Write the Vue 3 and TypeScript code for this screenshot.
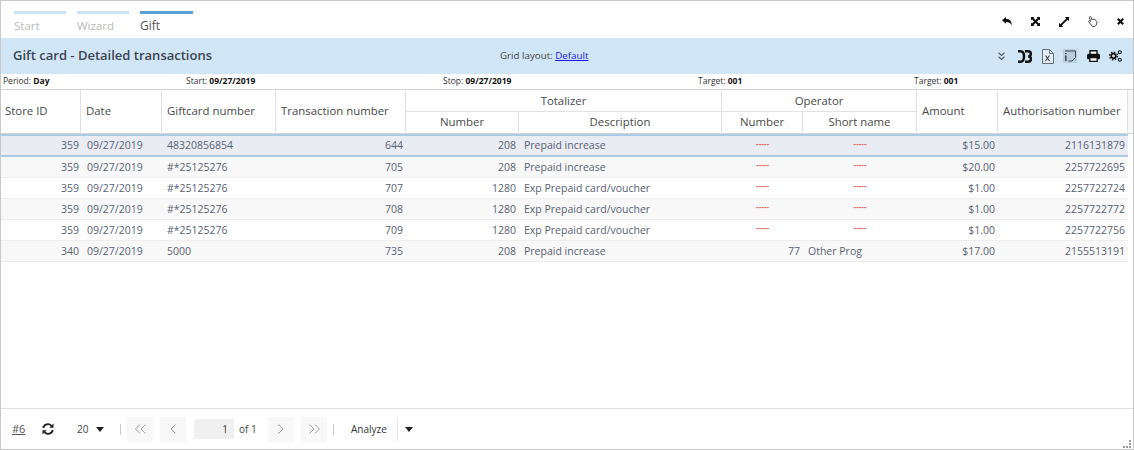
<script setup lang="ts">
interface Row {
  store: string; date: string; card: string; tx: string; num: string; desc: string;
  opNum: string; opName: string; amount: string; auth: string;
}
const d = '-----';
const rows: Row[] = [
  { store: '359', date: '09/27/2019', card: '48320856854', tx: '644', num: '208', desc: 'Prepaid increase', opNum: d, opName: d, amount: '$15.00', auth: '2116131879' },
  { store: '359', date: '09/27/2019', card: '#*25125276', tx: '705', num: '208', desc: 'Prepaid increase', opNum: d, opName: d, amount: '$20.00', auth: '2257722695' },
  { store: '359', date: '09/27/2019', card: '#*25125276', tx: '707', num: '1280', desc: 'Exp Prepaid card/voucher', opNum: d, opName: d, amount: '$1.00', auth: '2257722724' },
  { store: '359', date: '09/27/2019', card: '#*25125276', tx: '708', num: '1280', desc: 'Exp Prepaid card/voucher', opNum: d, opName: d, amount: '$1.00', auth: '2257722772' },
  { store: '359', date: '09/27/2019', card: '#*25125276', tx: '709', num: '1280', desc: 'Exp Prepaid card/voucher', opNum: d, opName: d, amount: '$1.00', auth: '2257722756' },
  { store: '340', date: '09/27/2019', card: '5000', tx: '735', num: '208', desc: 'Prepaid increase', opNum: '77', opName: 'Other Prog', amount: '$17.00', auth: '2155513191' },
];
const widths = [80, 81, 114, 130, 113, 203, 81, 114, 81, 130];
</script>

<template>
  <div class="window">
    <div class="topbar">
      <nav class="steps">
        <div class="step">Start</div>
        <div class="step">Wizard</div>
        <div class="step active">Gift</div>
      </nav>
      <div class="top-icons">
        <svg width="10" height="9" viewBox="0 0 10 9"><path d="M0 3.200 4 0v2c3.600 0 5.800 1.800 5.800 6.800C9 6.200 7.200 5 4 5v1.800z" fill="#111"/></svg>
        <svg width="9" height="9" viewBox="0 0 9 9" fill="#111"><path d="M0 0h3.400L2.500 1 4.500 3l2-2-.9-1H9v3.400L8 2.500l-2 2 2 2 1-.9V9H5.600l.9-1-2-2-2 2 .9 1H0V5.600l1 .9 2-2-2-2-1 .9z"/></svg>
        <svg width="10" height="10" viewBox="0 0 10 10" fill="#111"><path d="M5.800 0H10v4.200L8.600 2.800 2.800 8.600 4.200 10H0V5.800l1.400 1.400 5.800-5.800z"/></svg>
        <svg width="10" height="11" viewBox="0 0 10 11"><path d="M1.600.8c.6-.5 1.300-.2 1.500.5l.6 2.100 2.500-.2c1 .1 1.700.8 1.700 1.700l1.100 1.700-.8 2.600-1.600 1.300H4.400L.7 5.800c-.4-.6.3-1.300 1-.9l.9.6-1.200-4c-.1-.3 0-.5.2-.7z" fill="#fff" stroke="#444" stroke-width="1"/></svg>
        <svg width="7" height="7" viewBox="0 0 7 7"><path d="M.8.8l5.400 5.400M6.200.8.800 6.200" stroke="#111" stroke-width="2.200"/></svg>
      </div>
    </div>

    <header class="band">
      <h1 class="title">Gift card - Detailed transactions</h1>
      <div class="layout">Grid layout: <a href="#">Default</a></div>
      <div class="band-icons">
        <svg class="bi1" width="7" height="9" viewBox="0 0 7 9" fill="none" stroke="#56606e" stroke-width="1.200"><path d="M.5 .8l3 2.700 3-2.700M.5 4.800l3 2.700 3-2.700"/></svg>
        <svg class="bi2" width="14" height="13" viewBox="0 0 14 13" fill="none" stroke="#111" stroke-width="2.500"><path d="M0 1.300h2.500c2.300 0 3.500 2.200 3.500 5.200s-1.200 5.200-3.500 5.200H0"/><path d="M7 1.300h3.200c1.700 0 2.600 1 2.600 2.500s-1 2.700-2.700 2.700c1.900 0 2.900 1 2.900 2.600s-1 2.600-2.900 2.600H7"/></svg>
        <svg class="bi3" width="12" height="15" viewBox="0 0 12 15" fill="#e4edf5" stroke="#66707e"><path d="M.5.500h7l4 4v10H.5z"/><path d="M7.500.500v4h4" fill="none"/><path d="M3.500 6.500l4 5.500M7.500 6.500l-4 5.500" stroke="#333b48" stroke-width="1.100"/></svg>
        <span class="bi4"><svg width="12" height="12" viewBox="0 0 12 12" fill="none" stroke="#3f4753"><path d="M1 1h10.500v6.500l-3.500 3.500H4.500"/><path d="M1.800 3v1.200M1.800 5.500V11" stroke-width="1.500"/></svg></span>
        <svg class="bi5" width="13" height="12" viewBox="0 0 13 12"><path d="M3 4V.8h7V4" fill="#fff" stroke="#111" stroke-width="1.400"/><rect x="0" y="3.800" width="13" height="5.500" rx="1.500" fill="#111"/><path d="M2.800 7.500h7.400v3.800H2.800z" fill="#fff" stroke="#111" stroke-width="1.300"/></svg>
        <svg class="bi6" width="13" height="12" viewBox="0 0 13 12" fill="none" stroke="#111"><circle cx="4.500" cy="6" r="2.300" stroke-width="1.700"/><circle cx="4.500" cy="6" r="3.900" stroke-width="1.400" stroke-dasharray="1.500 1.560"/><circle cx="10.800" cy="2.200" r="1.500" stroke-width="1.100"/><circle cx="10.800" cy="9.800" r="1.500" stroke-width="1.100"/></svg>
      </div>
    </header>

    <div class="info">
      <span>Period: <b>Day</b></span>
      <span>Start: <b>09/27/2019</b></span>
      <span>Stop: <b>09/27/2019</b></span>
      <span>Target: <b>001</b></span>
      <span>Target: <b>001</b></span>
    </div>

    <div class="grid-wrap">
      <table class="grid">
        <colgroup>
          <col v-for="(w, i) in widths" :key="i" :style="{ width: w + 'px' }" />
          <col />
        </colgroup>
        <thead>
          <tr class="h1">
            <th rowspan="2" class="left first-col">Store ID</th>
            <th rowspan="2" class="left">Date</th>
            <th rowspan="2" class="left">Giftcard number</th>
            <th rowspan="2" class="left">Transaction number</th>
            <th colspan="2" class="group">Totalizer</th>
            <th colspan="2" class="group">Operator</th>
            <th rowspan="2" class="left">Amount</th>
            <th rowspan="2" class="left">Authorisation number</th>
            <th rowspan="2" class="tail"></th>
          </tr>
          <tr class="h2">
            <th>Number</th>
            <th>Description</th>
            <th>Number</th>
            <th>Short name</th>
          </tr>
        </thead>
        <tbody>
          <tr v-for="(r, i) in rows" :key="i" :class="{ selected: i === 0, odd: i % 2 === 1 }">
            <td class="r store">{{ r.store }}</td>
            <td class="date">{{ r.date }}</td>
            <td>{{ r.card }}</td>
            <td class="r">{{ r.tx }}</td>
            <td class="r">{{ r.num }}</td>
            <td>{{ r.desc }}</td>
            <td :class="r.opNum === d ? 'dash' : 'r'">{{ r.opNum }}</td>
            <td :class="{ dash: r.opName === d }">{{ r.opName }}</td>
            <td class="r">{{ r.amount }}</td>
            <td class="r">{{ r.auth }}</td>
            <td class="blank"></td>
          </tr>
        </tbody>
      </table>
    </div>

    <footer class="pager">
      <a class="count" href="#">#6</a>
      <svg class="refresh" width="12" height="12" viewBox="0 0 12 12" fill="none" stroke="#222" stroke-width="1.900"><path d="M1.200 5A4.800 4.800 0 0 1 9.500 2.800M10.800 7A4.800 4.800 0 0 1 2.500 9.200"/><path d="M11.500 .5v4.200H7.300zM.5 11.500V7.300h4.200z" fill="#222" stroke="none"/></svg>
      <span class="size">20</span>
      <span class="caret c1"></span>
      <span class="sep s1"></span>
      <button class="nav first"><svg width="11" height="10" viewBox="0 0 11 10" fill="none" stroke="#a0a0a0"><path d="M5 .5.500 5 5 9.500M10.500.5 6 5l4.500 4.500"/></svg></button>
      <button class="nav prev"><svg width="6" height="10" viewBox="0 0 6 10" fill="none" stroke="#909090"><path d="M5.500.5 1 5l4.500 4.500"/></svg></button>
      <span class="page">1</span>
      <span class="of">of 1</span>
      <button class="nav next"><svg width="6" height="10" viewBox="0 0 6 10" fill="none" stroke="#909090"><path d="M.5.500 5 5 .5 9.500"/></svg></button>
      <button class="nav last"><svg width="11" height="10" viewBox="0 0 11 10" fill="none" stroke="#a0a0a0"><path d="M.5.500 5 5 .5 9.500M6 .5 10.500 5 6 9.500"/></svg></button>
      <span class="sep s2"></span>
      <span class="analyze">Analyze</span>
      <span class="sep s3"></span>
      <span class="caret c2"></span>
      <span class="grip"><i></i><i></i><i class="on"></i><i></i><i></i><i class="on"></i><i class="on"></i><i class="on"></i><i class="on"></i></span>
    </footer>
  </div>
</template>

<style>
html, body { margin: 0; background: #fff; }
</style>

<style scoped>
.window {
  width: 1134px; height: 450px; box-sizing: border-box; border: 1px solid #c8c8c8;
  display: flex; flex-direction: column; background: #fff; overflow: hidden;
  font-family: "Open Sans", "Noto Sans", sans-serif; color: #4a5160;
}
.topbar { height: 37px; flex: none; display: flex; justify-content: space-between; }
.steps { display: flex; gap: 11px; padding: 10px 0 0 13px; }
.step {
  width: 52px; border-top: 3px solid #c8e3f5; padding-top: 3px;
  font-size: 11.5px; line-height: 17px; color: #b9b9b9;
}
.step.active { width: 53px; border-top-color: #5b9fd6; color: #555; font-size: 12px; }
.top-icons { display: flex; align-items: center; gap: 19px; padding-top: 4px; margin-right: 9px; }
.band {
  height: 36px; flex: none; background: #d0e6f7;
  display: flex; align-items: center; padding: 0 11px 0 12px;
}
.title { margin: 0 0 2px; width: 487px; flex: none; font-size: 13px; font-weight: 600; color: #3c4450; }
.layout { font-size: 9.75px; line-height: 15px; color: #444; margin-bottom: 1px; white-space: nowrap; }
.layout a { color: #1a1ae6; }
.band-icons { margin-left: auto; display: flex; align-items: center; }
.bi2 { margin-left: 13px; }
.bi3 { margin-left: 10px; }
.bi4 { margin-left: 9px; width: 14px; height: 14px; background: #b9cfe0; display: flex; align-items: center; justify-content: center; }
.bi5 { margin-left: 10px; }
.bi6 { margin-left: 9px; }
.info {
  height: 15px; flex: none; box-sizing: border-box; padding-left: 2px;
  display: grid; grid-template-columns: 183px 257px 255px 216px 1fr;
  font-size: 8.5px; line-height: 14px; color: #333; white-space: nowrap;
}
.info b { color: #111; }
.grid-wrap { flex: 1 1 0; min-height: 0; }
.grid {
  border-collapse: separate; border-spacing: 0; table-layout: fixed; width: 1132px;
  font-size: 10.5px;
}
th {
  font-weight: 400; font-size: 11.4px; color: #4a4a4a; text-align: center; padding: 0 5px;
  border-top: 1px solid #d4d4d4; border-right: 1px solid #e2e2e2; background: #fff; white-space: nowrap; overflow: hidden;
}
thead tr.h1 th { height: 21px; }
thead tr.h1 th[rowspan] { padding-bottom: 2px; }
thead tr.h2 th { height: 19px; padding-bottom: 2px; border-top: 1px solid #e2e2e2; }
thead tr.h2 th, thead tr.h1 th[rowspan] { border-bottom: 1px solid #d4d4d4; }
th.left { text-align: left; }
th.first-col { padding-left: 4px; }
th.tail { border-right: 0; padding: 0; background: #f7f7f7; }
td {
  height: 20px; padding: 0 5px; border-bottom: 1px solid #ededed; color: #586174;
  white-space: nowrap; overflow: hidden; background: #fff; line-height: 20px;
}
tr.odd td { background: #f8f8f8; }
td.r { text-align: right; padding-right: 3px; }
td.store { padding-right: 2px; }
td.date { padding-left: 6px; }
td.dash {
  text-align: center; color: #e46a6a; font-size: 8px; font-weight: 700; line-height: 16px;
  vertical-align: top; padding-top: 0; height: 20px;
}
td.blank { background: #fff !important; padding: 0; border: 0 !important; }
tr.selected td {
  background: #e9ecf2; height: 19px; line-height: 19px;
  border-top: 2px solid #a9cbe8; border-bottom: 2px solid #a9cbe8;
}
tr.selected td.dash { height: 19px; line-height: 15px; }
.pager {
  height: 41px; flex: none; box-sizing: border-box; border-top: 1px solid #dedede;
  display: flex; align-items: center;
  font-size: 10px; color: #444; line-height: 16px;
}
.pager > * { flex: none; }
.count { margin-left: 11px; width: 14px; font-size: 11px; color: #555; }
.refresh { margin-left: 16px; }
.size { margin-left: 23px; width: 13px; }
.caret { width: 0; height: 0; border: 4px solid transparent; border-top: 5px solid #222; border-bottom: 0; }
.c1 { margin-left: 6px; }
.c2 { margin-left: 7px; }
.sep { width: 1px; height: 11px; background: #c9c9c9; }
.s1 { margin-left: 16px; }
.s2 { margin-left: 6px; }
.s3 { margin-left: 9px; height: 23px; background: #e4e4e4; }
.nav { width: 26px; height: 25px; border: 0; padding: 0; background: #f8f8f8; display: flex; align-items: center; justify-content: center; }
.first { margin-left: 6px; }
.prev { margin-left: 7px; }
.next { margin-left: 11px; }
.last { margin-left: 7px; }
.page { margin-left: 8px; width: 34px; height: 20px; padding-right: 6px; background: #f0f0f0; text-align: right; line-height: 20px; color: #333; }
.of { margin-left: 5px; width: 18px; }
.analyze { margin-left: 17px; width: 37px; color: #333; white-space: nowrap; }
.grip {
  margin-left: auto; align-self: flex-end; display: grid; grid-template-columns: repeat(3, 3px);
  grid-auto-rows: 3px; width: 9px; height: 9px; margin-right: 1px;
}
.grip i { width: 2px; height: 2px; }
.grip i.on { background: #9d9aa6; }
</style>
